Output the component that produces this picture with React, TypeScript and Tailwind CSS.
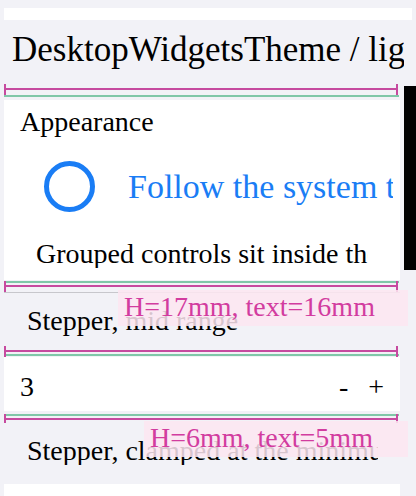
import React from "react";

const MAGENTA = "#c64a9f";
const GREEN = "#80c7a8";

function Marker({ magentaY, greenY, height }: { magentaY: number; greenY: number; height: number }) {
  return (
    <svg width={396} height={height} className="ml-1 block shrink-0">
      <line x1={0} y1={greenY} x2={395} y2={greenY} stroke={GREEN} strokeWidth={2} />
      <line x1={0} y1={magentaY} x2={394} y2={magentaY} stroke={MAGENTA} strokeWidth={2} />
      <line x1={1} y1={magentaY - 5} x2={1} y2={magentaY + 6} stroke={MAGENTA} strokeWidth={2} />
      <line x1={393} y1={magentaY - 5} x2={393} y2={magentaY + 6} stroke={MAGENTA} strokeWidth={2} />
    </svg>
  );
}

function Overlay({ left, label }: { left: number; label: string }) {
  return (
    <div
      className="absolute -top-[2px] h-[36px] bg-[#fde6f1]/85 pl-[6px] pt-[3px] text-[28px] leading-none whitespace-nowrap text-[#d23c9f]"
      style={{ left, width: 408 - left }}
    >
      {label}
    </div>
  );
}

export default function App(): JSX.Element {
  return (
    <div className="relative h-[496px] w-[416px] overflow-hidden bg-[#f2f2f7] font-[family-name:'Liberation_Serif',serif] text-black">
      <div className="flex flex-col pt-2">
        <div className="mx-1 h-[12px] bg-white" />

        <div className="h-[64px] w-[404px] overflow-hidden whitespace-nowrap pl-3 pt-[12px] text-[35px] leading-none">
          DesktopWidgetsTheme / light
        </div>

        <Marker height={14} magentaY={5} greenY={12} />

        <div className="mt-[2px] ml-1 flex h-[180px] w-[396px] flex-col bg-white">
          <div className="pl-4 pt-[8px] text-[28px] leading-none">Appearance</div>
          <div className="mt-[25px] flex h-[51px] w-[389px] items-center overflow-hidden whitespace-nowrap">
            <div className="ml-[40px] h-[51px] w-[51px] shrink-0 rounded-full border-[5px] border-[#1a7df5]" />
            <span className="ml-[33px] text-[34px] leading-none text-[#1a7df5]">
              Follow the system theme
            </span>
          </div>
          <div className="mt-[28px] w-[364px] overflow-hidden whitespace-nowrap pl-8 text-[28px] leading-none">
            Grouped controls sit inside the group
          </div>
        </div>

        <Marker height={12} magentaY={6} greenY={2} />

        <div className="relative h-[53px]">
          <div className="ml-1 h-px w-[396px] bg-[#c7c7cc]" />
          <div className="pl-[27px] pt-[14px] text-[28px] leading-none whitespace-nowrap">
            Stepper, mid range
          </div>
          <Overlay left={118} label="H=17mm, text=16mm" />
        </div>

        <Marker height={12} magentaY={6} greenY={10} />

        <div className="ml-1 flex h-[54px] w-[396px] items-start bg-white pt-[16px] pr-[16px] text-[28px] leading-none">
          <span className="pl-4">3</span>
          <div className="ml-auto flex gap-[20px]">
            <button className="leading-none">-</button>
            <button className="leading-none">+</button>
          </div>
        </div>

        <Marker height={12} magentaY={8} greenY={4} />

        <div className="relative h-[61px]">
          <div className="w-[378px] overflow-hidden whitespace-nowrap pl-[27px] pt-[14px] text-[28px] leading-none">
            Stepper, clamped at the minimum
          </div>
          <Overlay left={144} label="H=6mm, text=5mm" />
        </div>

        <div className="ml-1 h-[40px] w-[396px] bg-white" />
      </div>

      {/* scroll indicator */}
      <div className="absolute left-[404px] top-[86px] h-[184px] w-[12px] bg-black" />
    </div>
  );
}
